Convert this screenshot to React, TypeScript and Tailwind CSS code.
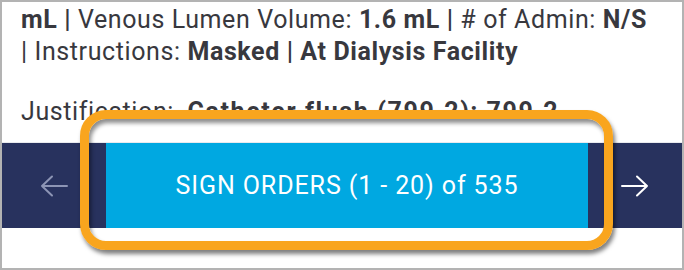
import React from 'react';

const Arrow: React.FC<{ dir: 'left' | 'right'; color: string }> = ({ dir, color }) => (
  <svg width="28" height="22" viewBox="0 0 28 22" fill="none" stroke={color} strokeWidth="2" strokeLinecap="round" strokeLinejoin="round">
    {dir === 'left' ? <path d="M2 11H27M12 1.5L2 11L12 20.5" /> : <path d="M26 11H1M16 1.5L26 11L16 20.5" />}
  </svg>
);

const App: React.FC = () => {
  return (
    <div className="relative w-[684px] h-[270px] overflow-hidden border-2 border-[#b3b3b3] bg-white font-['Roboto',sans-serif]">
      {/* Order details */}
      <div className="h-[140px] pl-[19px] pt-[1.5px] text-[25px] leading-[32px] tracking-[0.6px] text-[#38383e] whitespace-nowrap">
        <div>
          <span className="font-bold">mL |</span> Venous Lumen Volume: <span className="font-bold">1.6 mL |</span> # of Admin: <span className="font-bold">N/S</span>
        </div>
        <div>
          | Instructions: <span className="font-bold">Masked | At Dialysis Facility</span>
        </div>
        <div className="mt-[28px]">
          Justification:&nbsp; <span className="font-bold tracking-[1.6px]">Catheter flush (799.2); 799.2</span>
        </div>
      </div>

      {/* Bottom nav */}
      <div className="flex h-[86px] bg-[#28325e] border-t border-[#e9eaee]">
        <div className="w-[104px] flex items-center justify-center">
          <Arrow dir="left" color="#8d95b5" />
        </div>
        <button className="flex-1 bg-[#00a8e1] text-white text-[25px] tracking-[0.9px] flex items-center justify-center">
          SIGN ORDERS (1 - 20) of 535
        </button>
        <div className="w-[94px] flex items-center justify-center">
          <Arrow dir="right" color="#ffffff" />
        </div>
      </div>

      {/* Highlight callout */}
      <div className="absolute left-[78px] top-[108px] w-[533px] h-[140px] rounded-[26px] border-[9px] border-[#f9a51e] bg-[linear-gradient(to_bottom,#ffffff_23px,transparent_23px)] shadow-[2px_4px_4px_rgba(0,0,0,0.5),inset_2px_4px_4px_rgba(0,0,0,0.45)]" />
    </div>
  );
};

export default App;
